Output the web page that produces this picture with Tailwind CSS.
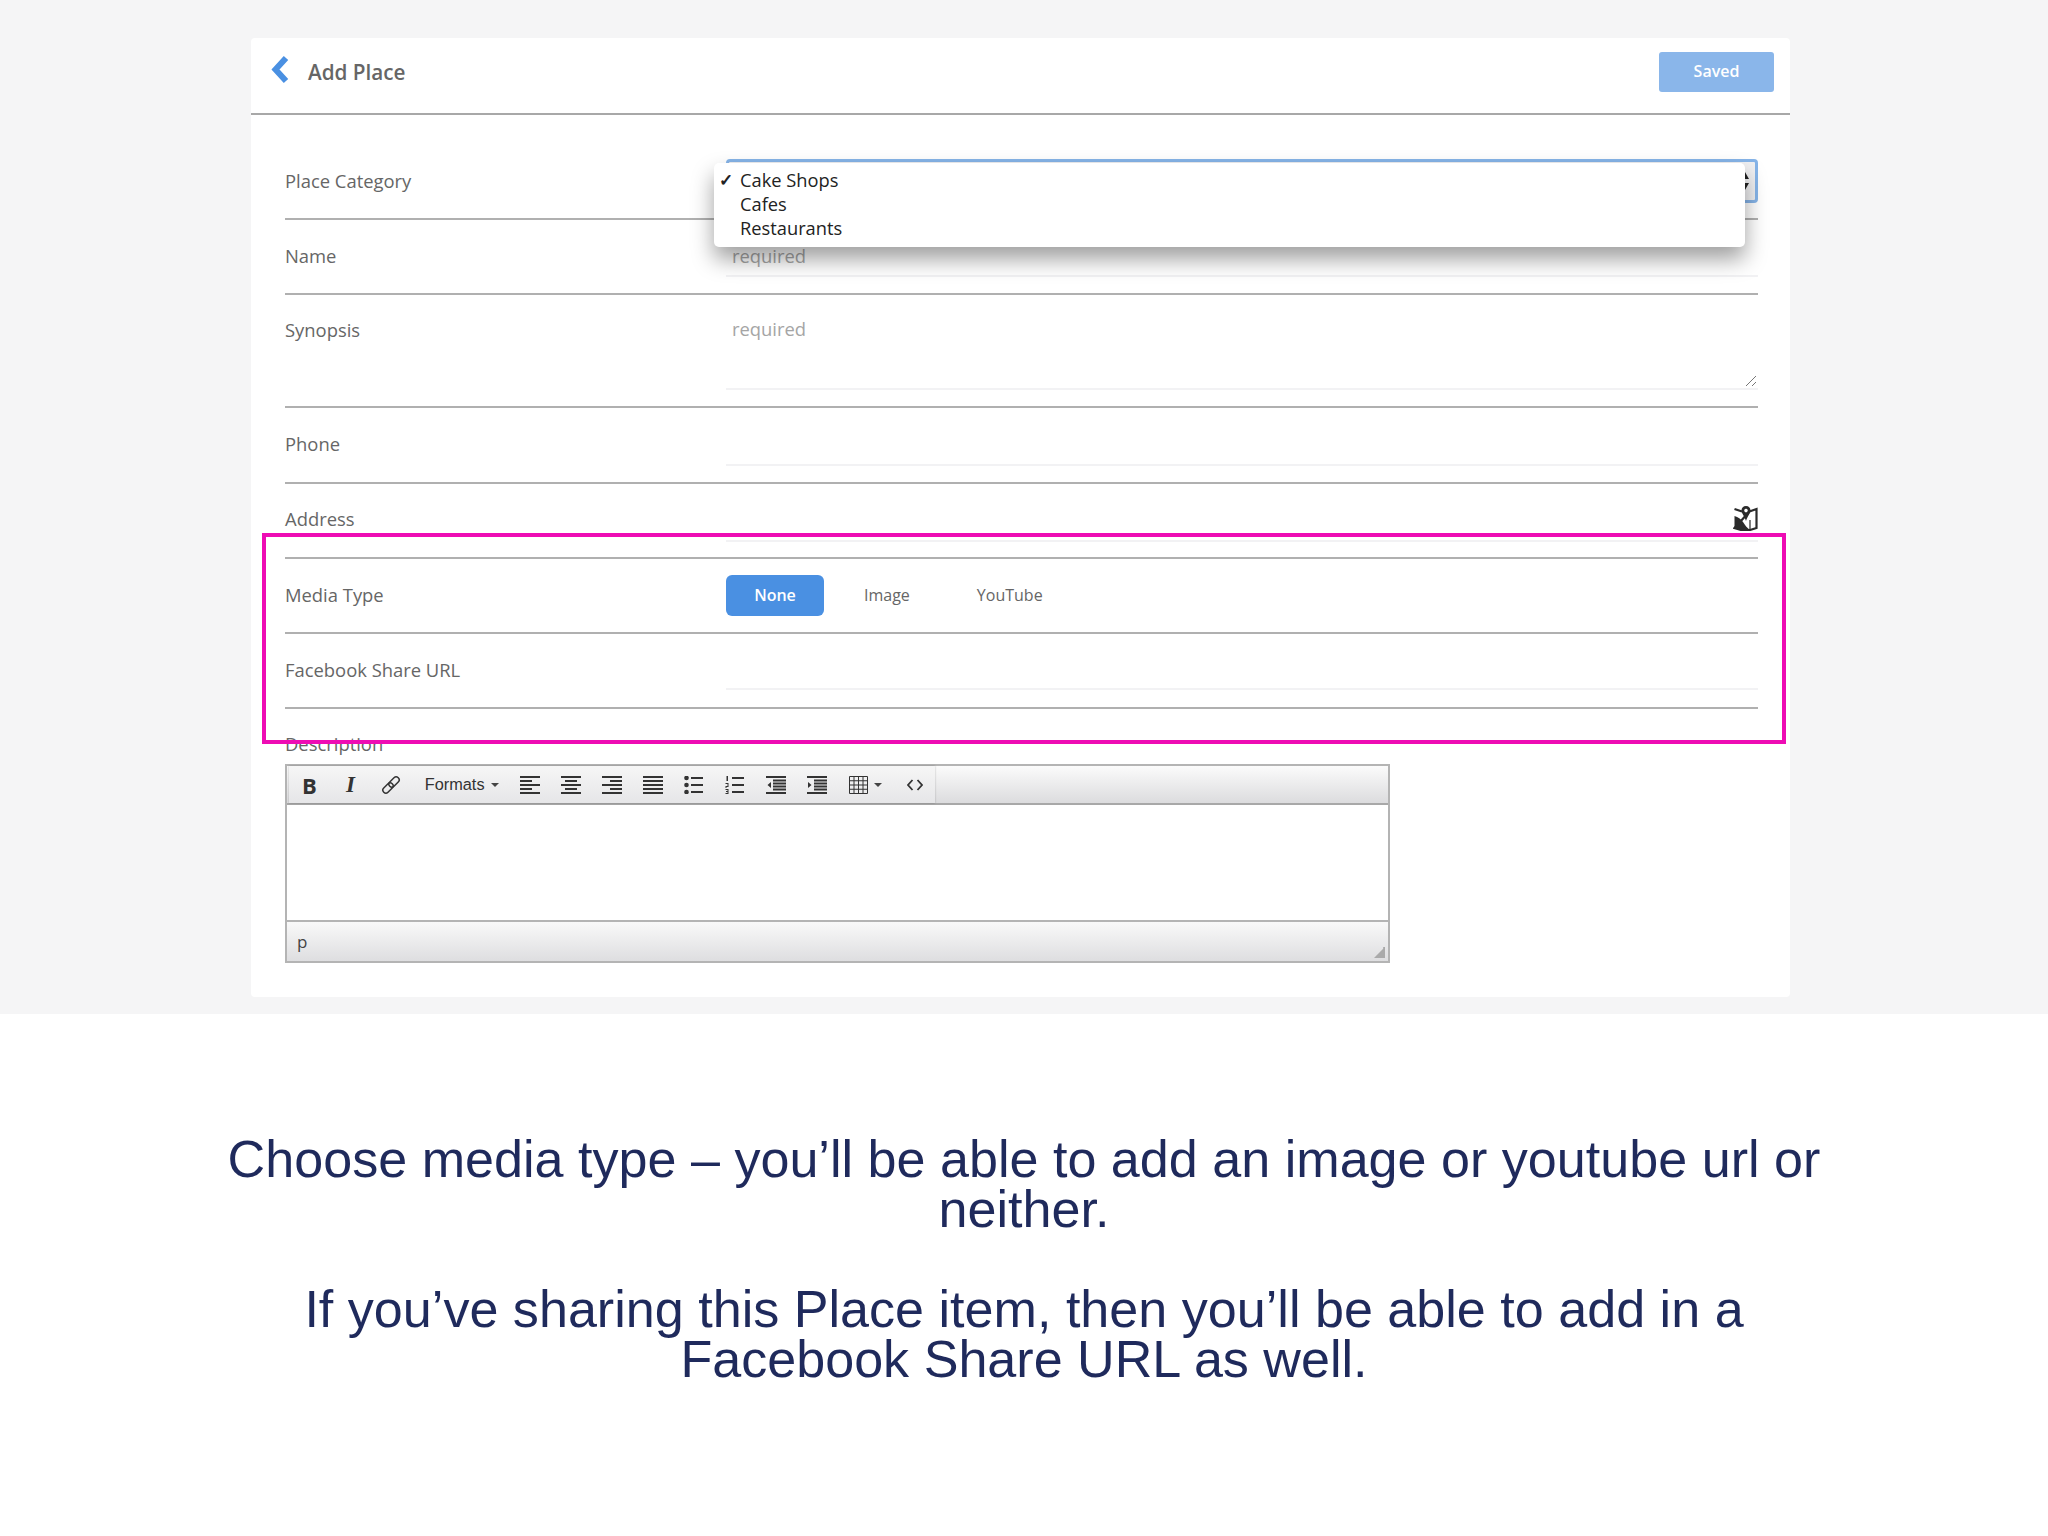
<!DOCTYPE html>
<html lang="en">

<head>
  <meta charset="UTF-8" />
  <title>Add Place</title>
  <script src="https://cdn.jsdelivr.net/npm/@tailwindcss/browser@4"></script>
</head>

<body class="bg-white font-['Open_Sans',sans-serif] text-[18.4px] text-[#666]">
  <div class="relative h-[1536px] overflow-hidden">

    <!-- app screenshot area -->
    <div class="bg-[#f5f5f6] h-[1014px] pt-[38px]">
      <div class="ml-[251px] w-[1539px] h-[959px] bg-white rounded-sm">

        <!-- header -->
        <div class="flex items-start justify-between h-[77px] border-b-2 border-[#a8a8a8] pt-[14px] pl-[18px] pr-[16px]">
          <div class="flex items-center h-[40px]">
            <svg class="w-[22px] h-[30px] text-[#4a90e2] -mt-[4px]" viewBox="0 0 22 30" fill="none" stroke="currentColor" stroke-width="6" stroke-linejoin="miter">
              <path d="M17 3L6.500 14.500L17 26" />
            </svg>
            <span class="ml-[17px] text-[20.7px] font-semibold leading-[30px]">Add Place</span>
          </div>
          <button class="w-[115px] h-[40px] bg-[#8ab6ea] rounded-[3px] text-white text-[16px] font-semibold pb-[2px]">Saved</button>
        </div>

        <div class="pl-[34px] pr-[32px] pt-[28px]">

          <!-- place category -->
          <div class="flex h-[77px] border-b-2 border-[#b0b0b0]">
            <div class="w-[441px] pt-[26px] leading-[24px]">Place Category</div>
            <div class="relative flex-1">
              <div class="mt-[16px] h-[44px] bg-[#f0f0f2] border-[3px] border-[#86b4e8] rounded-sm"></div>
              <svg class="absolute right-[8px] top-[28px] w-[10px] h-[20px] text-[#222]" viewBox="0 0 10 20" fill="currentColor">
                <path d="M5 1L9 8H1zM5 19L9 12H1z" />
              </svg>
              <!-- open select menu -->
              <div class="absolute left-[-12px] top-[20px] w-[1031px] h-[84px] z-10 bg-white rounded-[5px] shadow-[0_12px_22px_rgba(0,0,0,0.38)] pt-[5px] text-[18.3px] leading-[24px] text-[#222]">
                <div class="flex"><span class="w-[26px] pl-[5px] text-[17px] font-bold">✓</span>Cake Shops</div>
                <div class="pl-[26px]">Cafes</div>
                <div class="pl-[26px]">Restaurants</div>
              </div>
            </div>
          </div>

          <!-- name -->
          <div class="flex h-[75px] border-b-2 border-[#b0b0b0]">
            <div class="w-[441px] pt-[24px] leading-[24px]">Name</div>
            <div class="flex-1 h-[57px] border-b-2 border-[#f2f2f4] pl-[6px] pt-[24px] leading-[24px] text-[#a5a5a5]">required</div>
          </div>

          <!-- synopsis -->
          <div class="flex h-[113px] border-b-2 border-[#b0b0b0]">
            <div class="w-[441px] pt-[23px] leading-[24px]">Synopsis</div>
            <div class="relative flex-1 h-[95px] border-b-2 border-[#f2f2f4] pl-[6px] pt-[22px] leading-[24px] text-[#a5a5a5]">
              required
              <svg class="absolute right-[1px] bottom-[1px] w-[12px] h-[12px] text-[#777]" viewBox="0 0 12 12" fill="none" stroke="currentColor" stroke-width="1">
                <path d="M1 11L11 1M7 11L11 7" />
              </svg>
            </div>
          </div>

          <!-- phone -->
          <div class="flex h-[76px] border-b-2 border-[#b0b0b0]">
            <div class="w-[441px] pt-[24px] leading-[24px]">Phone</div>
            <div class="flex-1 h-[58px] border-b-2 border-[#f2f2f4]"></div>
          </div>

          <!-- address -->
          <div class="flex h-[75px] border-b-2 border-[#b0b0b0]">
            <div class="w-[441px] pt-[23px] leading-[24px]">Address</div>
            <div class="flex-1 h-[58px] border-b-2 border-[#f2f2f4] flex justify-end pt-[22px]">
              <svg class="w-[25px] h-[25px] text-[#2b2b2b]" viewBox="0 0 25 25">
                <path fill="none" stroke="currentColor" stroke-width="2.200" d="M1.500 3L9 5.500M16.500 5.500L23.500 3V22L17 24L8 24L1.500 22Z" />
                <path fill="none" stroke="currentColor" stroke-width="1.200" d="M17 14V24" />
                <path fill="currentColor" d="M1.500 10C5 11 8 13 10 16C12 19 14 22 17 24L8 24L1.500 22Z" />
                <path fill="currentColor" fill-rule="evenodd" d="M13 0C10 0 8.500 2 8.500 4.500C8.500 7.500 11.500 10 13 15C14.500 10 17.500 7.500 17.500 4.500C17.500 2 16 0 13 0ZM13 2.800A1.800 1.800 0 1 1 13 6.400A1.800 1.800 0 1 1 13 2.800Z" />
              </svg>
            </div>
          </div>

          <!-- media type -->
          <div class="flex h-[75px] border-b-2 border-[#b0b0b0]">
            <div class="w-[441px] pt-[24px] leading-[24px]">Media Type</div>
            <div class="flex-1 flex items-start pt-[16px] text-[16px]">
              <button class="w-[98px] h-[41px] bg-[#4a90e2] rounded-[6px] text-white font-semibold pb-[2px]">None</button>
              <button class="ml-[40px] h-[41px] pb-[2px]">Image</button>
              <button class="ml-[67px] h-[41px] pb-[2px]">YouTube</button>
            </div>
          </div>

          <!-- facebook share url -->
          <div class="flex h-[75px] border-b-2 border-[#b0b0b0]">
            <div class="w-[441px] pt-[24px] leading-[24px]">Facebook Share URL</div>
            <div class="flex-1 h-[56px] border-b-2 border-[#f2f2f4]"></div>
          </div>

          <div class="h-[55px] pt-[23px] leading-[24px]">Description</div>

          <!-- editor -->
          <div class="w-[1105px] h-[199px] border-2 border-[#b4b4b4] flex flex-col">
            <div class="h-[39px] shrink-0 border-b-2 border-[#a8a8a8] bg-gradient-to-b from-[#fbfbfb] to-[#dcdcde] pl-[2px] text-[#333]">
              <div class="flex items-center w-[646px] h-[37px] bg-gradient-to-b from-[#f6f6f6] to-[#e6e6e8] shadow-[0_0_2px_rgba(0,0,0,0.25)]">
                <span class="w-[41px] text-center font-bold text-[22px] leading-none">B</span>
                <span class="w-[41px] text-center font-['Liberation_Serif',serif] italic font-bold text-[23px] leading-none">I</span>
                <span class="w-[41px] flex justify-center">
                  <svg class="w-[20px] h-[20px]" viewBox="0 0 20 20" fill="none" stroke="currentColor" stroke-width="1.500">
                    <rect x="10" y="1" width="6" height="12" rx="3" transform="rotate(45 13 7)" />
                    <rect x="4" y="7" width="6" height="12" rx="3" transform="rotate(45 7 13)" />
                  </svg>
                </span>
                <span class="w-[98px] pl-[13px] flex items-center font-['Liberation_Sans',sans-serif] text-[16.300px]">Formats<span class="ml-[6px] border-x-[4px] border-t-[4px] border-x-transparent border-t-[#444]"></span></span>
                <span class="w-[41px] flex justify-center"><svg class="w-[20px] h-[18px]" viewBox="0 0 20 18" fill="currentColor"><path d="M0 0H20V2H0ZM0 4H12V6H0ZM0 8H20V10H0ZM0 12H12V14H0ZM0 16H20V18H0Z" /></svg></span>
                <span class="w-[41px] flex justify-center"><svg class="w-[20px] h-[18px]" viewBox="0 0 20 18" fill="currentColor"><path d="M0 0H20V2H0ZM4 4H16V6H4ZM0 8H20V10H0ZM4 12H16V14H4ZM0 16H20V18H0Z" /></svg></span>
                <span class="w-[41px] flex justify-center"><svg class="w-[20px] h-[18px]" viewBox="0 0 20 18" fill="currentColor"><path d="M0 0H20V2H0ZM8 4H20V6H8ZM0 8H20V10H0ZM8 12H20V14H8ZM0 16H20V18H0Z" /></svg></span>
                <span class="w-[41px] flex justify-center"><svg class="w-[20px] h-[18px]" viewBox="0 0 20 18" fill="currentColor"><path d="M0 0H20V2H0ZM0 4H20V6H0ZM0 8H20V10H0ZM0 12H20V14H0ZM0 16H20V18H0Z" /></svg></span>
                <span class="w-[41px] flex justify-center"><svg class="w-[20px] h-[18px]" viewBox="0 0 20 18" fill="currentColor"><circle cx="2.500" cy="2" r="2.300" /><circle cx="2.500" cy="9" r="2.300" /><circle cx="2.500" cy="16" r="2.300" /><path d="M7 1H19V3H7ZM7 8H19V10H7ZM7 15H19V17H7Z" /></svg></span>
                <span class="w-[41px] flex justify-center"><svg class="w-[20px] h-[18px]" viewBox="0 0 20 18" fill="currentColor"><path d="M1.500 0H3V5H1.500ZM0.500 7H3.500V8H0.500ZM2.500 8H3.500V10H2.500ZM0.500 10H3.500V11H0.500ZM0.500 11H1.500V12H0.500ZM0.500 13H3.500V18H0.500V17H2.500V16H1V15H2.500V14H0.500Z" /><path d="M7 1H19V3H7ZM7 8H19V10H7ZM7 15H19V17H7Z" /></svg></span>
                <span class="w-[41px] flex justify-center"><svg class="w-[20px] h-[18px]" viewBox="0 0 20 18" fill="currentColor"><path d="M0 0H20V2H0ZM7 3.500H20V5.500H7ZM7 6.500H20V8.500H7ZM7 9.500H20V11.500H7ZM7 12.500H20V14.500H7ZM0 16H20V18H0ZM5 6L1.500 9L5 12Z" /></svg></span>
                <span class="w-[41px] flex justify-center"><svg class="w-[20px] h-[18px]" viewBox="0 0 20 18" fill="currentColor"><path d="M0 0H20V2H0ZM7 3.500H20V5.500H7ZM7 6.500H20V8.500H7ZM7 9.500H20V11.500H7ZM7 12.500H20V14.500H7ZM0 16H20V18H0ZM1 6L4.500 9L1 12Z" /></svg></span>
                <span class="w-[57px] pl-[12px] flex items-center">
                  <svg class="w-[19px] h-[18px]" viewBox="0 0 19 18" fill="none" stroke="currentColor" stroke-width="1"><path d="M.5 .5H18.500V17.500H.5ZM.5 4.750H18.500M.5 9H18.500M.5 13.250H18.500M5 .5V17.500M9.500 .5V17.500M14 .5V17.500" /></svg>
                  <span class="ml-[6px] border-x-[4px] border-t-[4px] border-x-transparent border-t-[#444]"></span>
                </span>
                <span class="w-[41px] flex justify-center">
                  <svg class="w-[16px] h-[12px]" viewBox="0 0 16 12" fill="none" stroke="currentColor" stroke-width="1.800"><path d="M5.500 1L1 6L5.500 11M10.500 1L15 6L10.500 11" /></svg>
                </span>
              </div>
            </div>
            <div class="flex-1 bg-white"></div>
            <div class="relative h-[41px] shrink-0 border-t-2 border-[#b4b4b4] bg-gradient-to-b from-[#f9f9f9] to-[#dedee0] pl-[10px] leading-[40px] text-[#444] text-[17px]">
              p
              <svg class="absolute right-[3px] bottom-[3px] w-[11px] h-[11px] text-[#aaa]" viewBox="0 0 12 12" fill="currentColor">
                <path d="M10 0H12V12H0L10 2Z" />
              </svg>
            </div>
          </div>
        </div>
      </div>
    </div>

    <!-- slide caption -->
    <div class="pt-[120px] text-center font-['Liberation_Sans',sans-serif] text-[52.100px] leading-[50px] text-[#1f2a5c]">
      <p>Choose media type – you’ll be able to add an image or youtube url or<br />neither.</p>
      <p class="mt-[50px]">If you’ve sharing this Place item, then you’ll be able to add in a<br />Facebook Share URL as well.</p>
    </div>

    <!-- highlight box on the slide -->
    <div class="absolute left-[262px] top-[533px] w-[1524px] h-[211px] border-4 border-[#ee0cb4] z-20"></div>
  </div>
</body>

</html>
